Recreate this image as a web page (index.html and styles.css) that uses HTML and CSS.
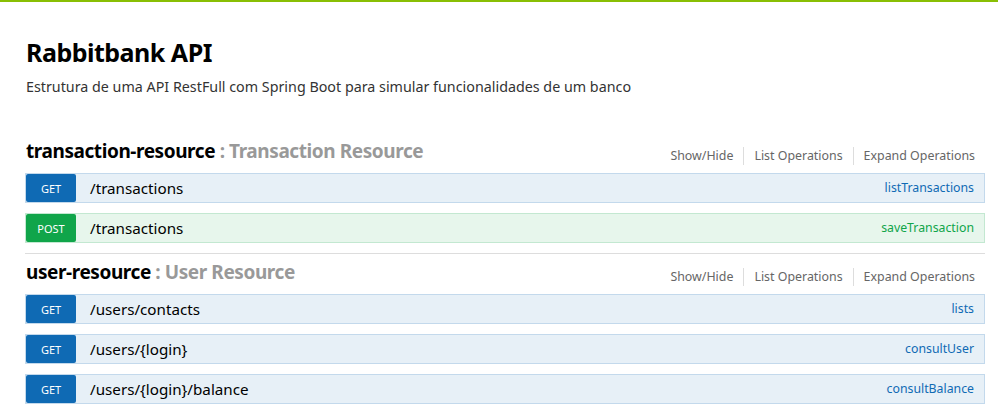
FILE: index.html
```html
<!DOCTYPE html>
<html>
<head>
<meta charset="utf-8">
<link rel="stylesheet" href="styles.css">
</head>
<body>
<div class="topbar"></div>
<div class="wrap">
  <div class="info">
    <h1 class="info-title">Rabbitbank API</h1>
    <div class="info-desc">Estrutura de uma API RestFull com Spring Boot para simular funcionalidades de um banco</div>
  </div>
  <ul class="resources">
    <li class="resource">
      <div class="heading">
        <h2><span class="res-name">transaction-resource</span> : Transaction Resource</h2>
        <ul class="options">
          <li>Show/Hide</li>
          <li>List Operations</li>
          <li>Expand Operations</li>
        </ul>
      </div>
      <ul class="operations">
        <li class="op get"><span class="method">GET</span><span class="path">/transactions</span><span class="nick">listTransactions</span></li>
        <li class="op post"><span class="method">POST</span><span class="path">/transactions</span><span class="nick">saveTransaction</span></li>
      </ul>
    </li>
    <li class="resource">
      <div class="heading">
        <h2><span class="res-name">user-resource</span> : User Resource</h2>
        <ul class="options">
          <li>Show/Hide</li>
          <li>List Operations</li>
          <li>Expand Operations</li>
        </ul>
      </div>
      <ul class="operations">
        <li class="op get"><span class="method">GET</span><span class="path">/users/contacts</span><span class="nick">lists</span></li>
        <li class="op get"><span class="method">GET</span><span class="path">/users/{login}</span><span class="nick">consultUser</span></li>
        <li class="op get"><span class="method">GET</span><span class="path">/users/{login}/balance</span><span class="nick">consultBalance</span></li>
      </ul>
    </li>
  </ul>
</div>
</body>
</html>
```
FILE: styles.css
```css
* { box-sizing: border-box; }
html, body { margin: 0; padding: 0; background: #fff; }
body { font-family: "Noto Sans", "Open Sans", sans-serif; color: #000; }
.topbar { height: 2px; background: #89bf04; }
.wrap { width: 960px; margin-left: 25px; }
.info { padding-top: 34px; }
.info-title { margin: 0; font-size: 25px; letter-spacing: -0.5px; line-height: 32px; font-weight: bold; padding-left: 1px; }
.info-desc { margin-top: 9px; font-size: 14.3px; line-height: 20px; color: #333; padding-left: 1px; }
ul { list-style: none; margin: 0; padding: 0; }
.resources { margin-top: 36px; }
.resource { border-bottom: 1px solid #ddd; }
.resource:last-child { border-bottom: 0; }
.heading { height: 40px; display: flex; align-items: flex-start; justify-content: space-between; }
.heading h2 { margin: 0; font-size: 19px; letter-spacing: -0.42px; line-height: 36px; font-weight: bold; color: #999; padding-left: 1px; }
.res-name { color: #000; }
.options { display: flex; padding-top: 14px; padding-right: 10px; }
.options li { font-size: 12.4px; line-height: 18px; color: #666; padding: 0 10px; border-right: 1px solid #ddd; }
.options li:last-child { border-right: 0; padding-right: 0; }
.operations { padding-bottom: 10px; }
.op { display: flex; align-items: center; height: 30px; border: 1px solid #c3d9ec; background: #e7f0f7; margin-bottom: 10px; }
.op:last-child { margin-bottom: 0; }
.method { width: 50px; height: 28px; line-height: 28px; padding-top: 1px; text-align: center; color: #fff; font-size: 11px; border-radius: 2px; background: #0f6ab4; }
.path { margin-left: 14px; font-size: 15.2px; line-height: 26px; padding-bottom: 1px; flex: 1; color: #000; }
.nick { font-size: 12.3px; line-height: 28px; padding-right: 10px; color: #0f6ab4; }
.op.post { background: #e7f6ec; border-color: #c3e8d1; }
.op.post .method { background: #10a54a; }
.op.post .nick { color: #10a54a; }
```
